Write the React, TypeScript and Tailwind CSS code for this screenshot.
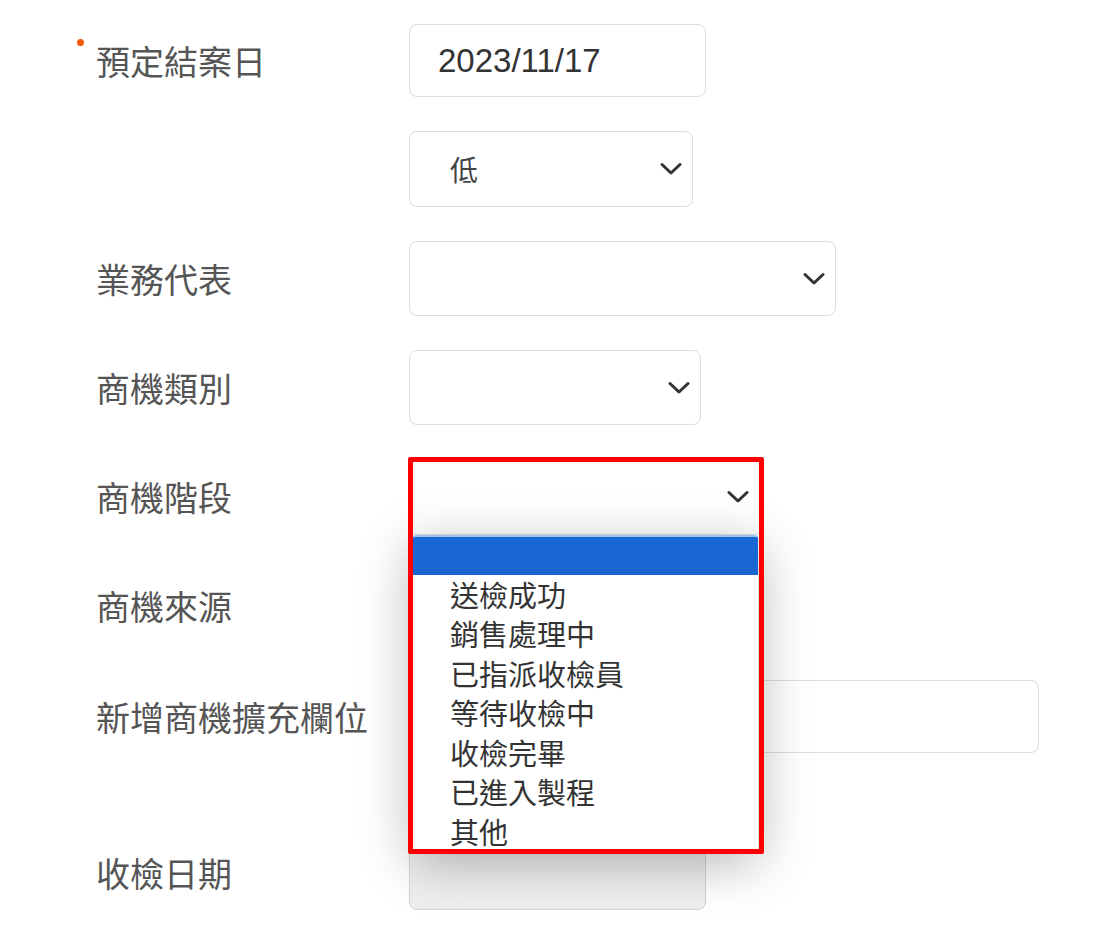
const font = { fontFamily: '"Noto Sans CJK TC", "Noto Sans", sans-serif' }

const stages = ['送檢成功', '銷售處理中', '已指派收檢員', '等待收檢中', '收檢完畢', '已進入製程', '其他']

function Chevron() {
  return (
    <svg width="22" height="14" viewBox="0 0 22 14" fill="none" className="text-[#333]">
      <path d="M2 2.5 L11 11 L20 2.5" stroke="currentColor" strokeWidth="3" strokeLinecap="round" strokeLinejoin="round" />
    </svg>
  )
}

function Label({ text, required }: { text?: string; required?: boolean }) {
  return (
    <div className="relative w-[313px] shrink-0 text-[34px] leading-none text-[#555]">
      {required && <span className="absolute -left-[19px] -top-[5px] h-[7px] w-[7px] rounded-full bg-[#f05a0a]" />}
      {text}
    </div>
  )
}

export default function App() {
  return (
    <div className="relative h-[930px] w-full overflow-hidden bg-white pl-[96px] pt-[24px]" style={font}>
      <div className="flex items-center">
        <Label text="預定結案日" required />
        <div className="flex h-[73px] w-[297px] items-center rounded-lg border border-[#dcdcdc] bg-white pl-[28px]">
          <span className="text-[33px] text-[#333]" style={{ fontFamily: '"Liberation Sans", Arial, sans-serif' }}>
            2023/11/17
          </span>
        </div>
      </div>

      <div className="mt-[34px] flex items-center">
        <Label />
        <div className="flex h-[76px] w-[284px] items-center justify-between rounded-lg border border-[#dcdcdc] bg-white pl-[40px] pr-[10px]">
          <span className="text-[28px] text-[#444]">低</span>
          <Chevron />
        </div>
      </div>

      <div className="mt-[34px] flex items-center">
        <Label text="業務代表" />
        <div className="flex h-[75px] w-[427px] items-center justify-end rounded-lg border border-[#dcdcdc] bg-white pr-[10px]">
          <Chevron />
        </div>
      </div>

      <div className="mt-[34px] flex items-center">
        <Label text="商機類別" />
        <div className="flex h-[75px] w-[292px] items-center justify-end rounded-lg border border-[#dcdcdc] bg-white pr-[10px]">
          <Chevron />
        </div>
      </div>

      <div className="mt-[34px] flex items-center">
        <Label text="商機階段" />
        <div className="flex h-[76px] w-[353px] items-center justify-end rounded-lg border border-[#dcdcdc] bg-white pr-[12px]">
          <Chevron />
        </div>
      </div>

      <div className="mt-[33px] flex items-center">
        <Label text="商機來源" />
        <div className="h-[75px] w-[297px] rounded-lg border border-[#dcdcdc] bg-white" />
      </div>

      <div className="mt-[37px] flex items-center">
        <Label text="新增商機擴充欄位" />
        <div className="h-[73px] w-[630px] rounded-lg border border-[#dcdcdc] bg-white" />
      </div>

      <div className="mt-[83px] flex items-center">
        <Label text="收檢日期" />
        <div className="h-[74px] w-[297px] rounded-lg border border-[#d4d4d4] bg-[#efefef]" />
      </div>

      {/* open dropdown list */}
      <div className="absolute left-[413px] top-[535px] h-[315px] w-[345px] bg-white shadow-[0_12px_50px_rgba(0,0,0,0.3)]">
        <div className="h-[39.5px] rounded-t-[3px] border-t-2 border-[#9fc3f0] bg-[#1a66d2]" />
        {stages.map(s => (
          <div key={s} className="flex h-[39.5px] items-center pl-[37px] text-[29px] leading-none text-[#333]">
            {s}
          </div>
        ))}
      </div>

      {/* annotation box */}
      <div className="absolute left-[408px] top-[457px] h-[397px] w-[356px] rounded-[2px] border-[5px] border-[#ff0000]" />
    </div>
  )
}
